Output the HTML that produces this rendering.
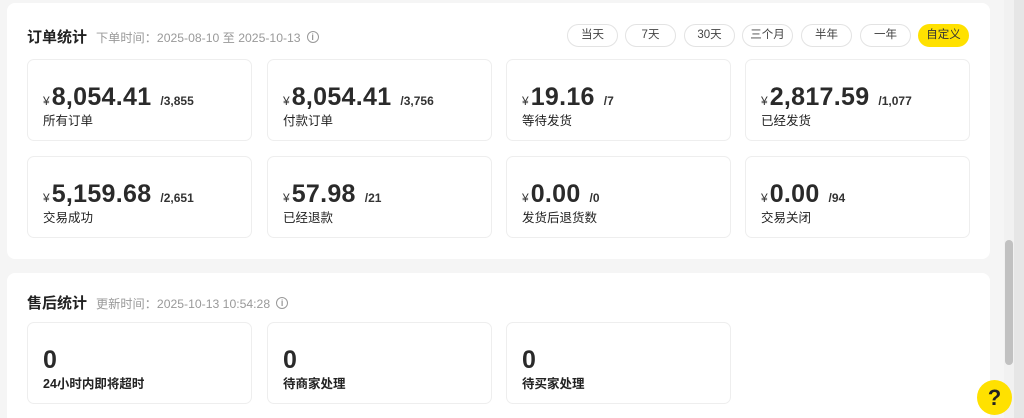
<!DOCTYPE html>
<html><head><meta charset="utf-8"><style>
*{box-sizing:border-box;margin:0;padding:0}
html,body{width:1024px;height:418px;overflow:hidden}
body{background:#f5f5f5;font-family:"Liberation Sans","Noto Sans CJK SC",sans-serif;color:#222;position:relative}
.panel{position:absolute;left:7px;width:983px;background:#fff;border-radius:8px}
.title{position:absolute;left:20px;font-size:15px;font-weight:bold;color:#222}
.sub{position:absolute;left:89px;font-size:12.2px;color:#999;display:flex;align-items:center;gap:6px}
.info{width:12px;height:12px;border:1px solid #999;border-radius:50%;font-size:9px;line-height:10px;text-align:center;color:#999;font-weight:bold}
.card{position:absolute;width:225px;height:82px;border:1px solid #eee;border-radius:7px;background:#fff}
.val{position:absolute;left:15px;top:23px;white-space:nowrap;display:flex;align-items:baseline}
.y{font-size:12px;color:#333;margin-right:2px}
.n{font-size:25px;font-weight:bold;color:#2a2a2a;letter-spacing:0.3px}
.c{font-size:12px;font-weight:bold;color:#333;margin-left:9px}
.lab{position:absolute;left:15px;top:50px;font-size:12.5px;color:#222}
.btn{position:absolute;top:21px;height:23px;width:51px;border:1px solid #e3e3e3;border-radius:12px;font-size:11.5px;color:#444;text-align:center;line-height:21px}
</style></head><body>
<div class="panel" style="top:3px;height:256px">
<div class="title" style="top:23px">订单统计</div>
<div class="sub" style="top:25px">下单时间：2025-08-10 至 2025-10-13 <span class="info">i</span></div>
<div class="btn" style="left:560px">当天</div>
<div class="btn" style="left:618px">7天</div>
<div class="btn" style="left:677px">30天</div>
<div class="btn" style="left:735px">三个月</div>
<div class="btn" style="left:794px">半年</div>
<div class="btn" style="left:853px">一年</div>
<div class="btn" style="left:911px;background:#ffe100;border-color:#ffe100;color:#333">自定义</div>
</div>
<div class="card" style="left:27px;top:59px"><div class="val"><span class="y">¥</span><span class="n">8,054.41</span><span class="c">/3,855</span></div><div class="lab">所有订单</div></div>
<div class="card" style="left:267px;top:59px"><div class="val"><span class="y">¥</span><span class="n">8,054.41</span><span class="c">/3,756</span></div><div class="lab">付款订单</div></div>
<div class="card" style="left:506px;top:59px"><div class="val"><span class="y">¥</span><span class="n">19.16</span><span class="c">/7</span></div><div class="lab">等待发货</div></div>
<div class="card" style="left:745px;top:59px"><div class="val"><span class="y">¥</span><span class="n">2,817.59</span><span class="c">/1,077</span></div><div class="lab">已经发货</div></div>
<div class="card" style="left:27px;top:156px"><div class="val"><span class="y">¥</span><span class="n">5,159.68</span><span class="c">/2,651</span></div><div class="lab">交易成功</div></div>
<div class="card" style="left:267px;top:156px"><div class="val"><span class="y">¥</span><span class="n">57.98</span><span class="c">/21</span></div><div class="lab">已经退款</div></div>
<div class="card" style="left:506px;top:156px"><div class="val"><span class="y">¥</span><span class="n">0.00</span><span class="c">/0</span></div><div class="lab">发货后退货数</div></div>
<div class="card" style="left:745px;top:156px"><div class="val"><span class="y">¥</span><span class="n">0.00</span><span class="c">/94</span></div><div class="lab">交易关闭</div></div>
<div class="panel" style="top:273px;height:145px;border-radius:8px 8px 0 0">
<div class="title" style="top:19px">售后统计</div>
<div class="sub" style="top:21px">更新时间：2025-10-13 10:54:28 <span class="info">i</span></div>
</div>
<div class="card" style="left:27px;top:322px"><div class="val"><span class="n">0</span></div><div class="lab" style="font-weight:bold">24小时内即将超时</div></div>
<div class="card" style="left:267px;top:322px"><div class="val"><span class="n">0</span></div><div class="lab" style="font-weight:bold">待商家处理</div></div>
<div class="card" style="left:506px;top:322px"><div class="val"><span class="n">0</span></div><div class="lab" style="font-weight:bold">待买家处理</div></div>
<div style="position:absolute;left:1004px;top:0;width:20px;height:418px;background:#f1f1f1"></div>
<div style="position:absolute;left:1014px;top:0;width:10px;height:418px;background:#e6e6e6"></div>
<div style="position:absolute;left:1005px;top:240px;width:8px;height:125px;background:#c1c1c1;border-radius:4px"></div>
<div style="position:absolute;left:977px;top:380px;width:35px;height:35px;border-radius:50%;background:#ffe100;text-align:center;line-height:35px;font-size:22px;font-weight:bold;color:#222">?</div>
</body></html>
